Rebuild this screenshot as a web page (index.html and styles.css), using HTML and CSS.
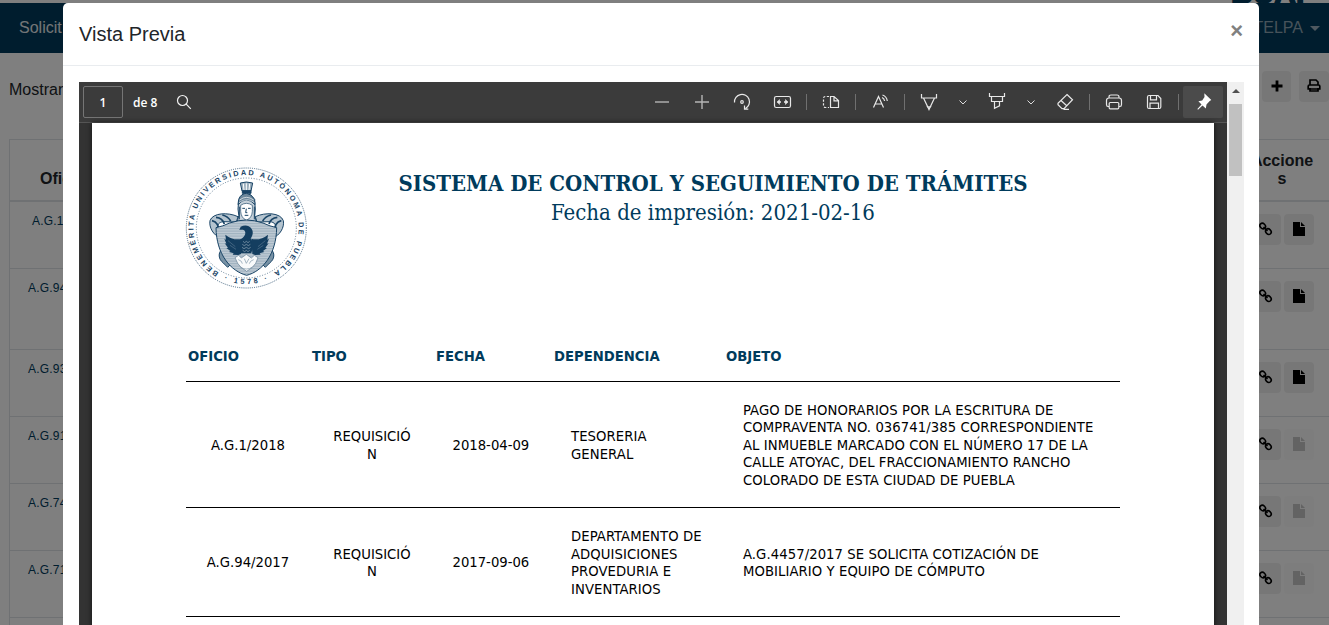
FILE: index.html
```
<!DOCTYPE html>
<html lang="es">
<head>
<meta charset="utf-8">
<title>Vista Previa</title>
<link rel="stylesheet" href="styles.css">
</head>
<body>
<svg width="0" height="0" class="defs">
  <symbol id="link" viewBox="0 0 14 14"><g fill="none" stroke="currentColor" stroke-width="1.6"><ellipse cx="3.7" cy="4" rx="3" ry="2.5" transform="rotate(45 3.7 4)"/><ellipse cx="9.4" cy="9.6" rx="3" ry="2.5" transform="rotate(45 9.4 9.6)"/><path d="M4.5 5l4 4"/></g></symbol>
  <symbol id="file" viewBox="0 0 12 14"><path fill="currentColor" d="M0 0h7v5h5v9H0zM8 0l4 4H8z"/></symbol>
  <symbol id="chev" viewBox="0 0 10 10"><path d="M1.500 3.500L5 7l3.500-3.500" fill="none" stroke="currentColor"/></symbol>
</svg>
<div class="site">
  <div class="brand"><span>BUAP</span></div>
  <nav class="navbar"><span class="nav-link">Solicit</span><span class="user">TELPA<i class="caret"></i></span></nav>
  <div class="filters"><span>Mostrar</span>
    <div class="tools">
      <span class="btn"><svg width="12" height="12" viewBox="0 0 12 12"><path d="M6 .5v11M.5 6h11" stroke="#000" stroke-width="2.800"/></svg></span>
      <span class="btn"><svg width="14" height="13" viewBox="0 0 14 13"><path d="M3 6V1h6l2 2v3M1.200 10V7.200Q1.200 6 2.400 6h9.200q1.200 0 1.200 1.200V10zM3 9v3h8V9" fill="none" stroke="#000" stroke-width="1.700"/></svg></span>
    </div>
  </div>
  <div class="grid">
    <div class="row head"><b>Oficio</b><b class="actions-title">Accione<br>s</b></div>
    <div class="row"><span class="num short">A.G.1/2018</span><span class="acts"><i class="btn"><svg><use href="#link"/></svg></i><i class="btn"><svg class="f"><use href="#file"/></svg></i></span></div>
    <div class="row tall"><span class="num">A.G.94/2017</span><span class="acts"><i class="btn"><svg><use href="#link"/></svg></i><i class="btn"><svg class="f"><use href="#file"/></svg></i></span></div>
    <div class="row"><span class="num">A.G.93/2017</span><span class="acts"><i class="btn"><svg><use href="#link"/></svg></i><i class="btn"><svg class="f"><use href="#file"/></svg></i></span></div>
    <div class="row"><span class="num">A.G.91/2017</span><span class="acts"><i class="btn"><svg><use href="#link"/></svg></i><i class="btn off"><svg class="f"><use href="#file"/></svg></i></span></div>
    <div class="row"><span class="num">A.G.74/2017</span><span class="acts"><i class="btn"><svg><use href="#link"/></svg></i><i class="btn off"><svg class="f"><use href="#file"/></svg></i></span></div>
    <div class="row"><span class="num">A.G.71/2017</span><span class="acts"><i class="btn"><svg><use href="#link"/></svg></i><i class="btn off"><svg class="f"><use href="#file"/></svg></i></span></div>
    <div class="row"></div>
  </div>
</div>
<div class="backdrop"></div>
<section class="modal">
  <header class="modal-head"><h5>Vista Previa</h5><span class="close">×</span></header>
  <div class="frame">
    <div class="viewer">
      <div class="toolbar">
        <span class="pageno">1</span><span class="of">de 8</span>
        <svg class="search" width="16" height="16" viewBox="0 0 16 16" fill="none" stroke="#f2f2f2" stroke-width="1.200"><circle cx="6.500" cy="6.500" r="5"/><path d="M10.200 10.200l4.600 4.600"/></svg>
        <div class="icons">
          <span class="ic"><svg viewBox="0 0 20 20"><path d="M3 10h14" stroke="#b5b5b5" stroke-width="1.400"/></svg></span>
          <span class="ic"><svg viewBox="0 0 20 20"><path d="M3 10h14M10 3v14" stroke="#b5b5b5" stroke-width="1.400"/></svg></span>
          <span class="ic"><svg viewBox="0 0 20 20"><path d="M2.500 10.500A7.500 7.500 0 1 1 13.500 16.500M12.500 13.500v3.600h3.800"/><circle cx="10" cy="10" r="1.300"/></svg></span>
          <span class="ic"><svg viewBox="0 0 20 20"><rect x="2.500" y="4.500" width="16" height="11" rx="1.800"/><path d="M5.500 10h3.500M12 10h3.500" stroke-width="1.500"/><path d="M4.800 10l3-2.900v5.800zM16.200 10l-3-2.900v5.800z" fill="#e8e8e8" stroke="none"/></svg></span>
          <i class="sep"></i>
          <span class="ic"><svg viewBox="0 0 20 20"><path d="M9.500 4.500H13l4.500 4v7h-8zM13 4.500v4.300h4.500"/><path d="M8 4.500H4.500Q2.500 4.500 2.500 6.500v7q0 2 2 2H8" stroke-dasharray="2.200 1.500"/></svg></span>
          <i class="sep"></i>
          <span class="ic"><svg viewBox="0 0 20 20"><path d="M3.500 15.500L8.500 4.500 13.500 15.500M5.200 12h6.600M12 5.500q2.300 1 2.600 3.500M12.500 3q4.200 1.500 4.800 6"/></svg></span>
          <i class="sep"></i>
          <span class="ic"><svg viewBox="0 0 20 20"><path d="M2.500 2v4h15V2M4.500 6L10 17.500 15.500 6M8.500 14.800h3L10 17.200z"/></svg></span>
          <span class="ic dd"><svg><use href="#chev"/></svg></span>
          <span class="ic up"><svg viewBox="0 0 20 20"><path d="M2.500 2v3.500h15V2M4.500 5.500v5h11v-5M7.500 10.500v6.800l5-2.500v-4.300"/></svg></span>
          <span class="ic dd"><svg><use href="#chev"/></svg></span>
          <span class="ic"><svg viewBox="0 0 20 20"><path d="M12 2.500l5.500 5.200-8.500 9H7l-4-4v-1.500zM6 8.500l6 5.500M8.500 17.300h5.500"/></svg></span>
          <i class="sep"></i>
          <span class="ic"><svg viewBox="0 0 20 20"><path d="M5 6V5q0-2 2-2h6q2 0 2 2v1M5 14.500H4q-1.500 0-1.500-2V8.500q0-2.500 2.500-2.500h10q2.500 0 2.500 2.500v4q0 2-1.500 2h-1"/><rect x="5.200" y="10.500" width="9.600" height="6.300" rx="1"/></svg></span>
          <span class="ic"><svg viewBox="0 0 20 20"><path d="M3.500 5q0-1.500 1.500-1.500h9l2.800 3v8.500q0 1.500-1.500 1.500H5q-1.500 0-1.500-1.500zM6.500 3.500v4.300h6V3.500M6 16.500v-5.300h8.500v5.300"/></svg></span>
          <i class="sep"></i>
          <span class="ic pin"><svg viewBox="0 0 20 20"><path d="M11.300 1.200l7 6.800-1.600.9-3.200 3.700-.7 3.800-3.300-3-4.500 4.300-.6-.6 4.100-4.600-3.100-3.300 3.800-.8 2.300-3.300z" fill="#fff" stroke="none"/></svg></span>
        </div>
      </div>
      <div class="canvas"><div class="page">
        <div class="doc-head">
          <svg class="seal" viewBox="0 0 426 426" width="142" height="142">
            <defs><path id="arc" d="M128 344A158 158 0 1 1 296 342"/><path id="arc2" d="M126 356A174 174 0 0 0 296 356"/>
            <pattern id="lines" width="5" height="5" patternUnits="userSpaceOnUse"><rect width="5" height="5" fill="#dbe2e8"/><path d="M0 2h5" stroke="#55758c" stroke-width="1.600"/></pattern></defs>
            <g fill="none" stroke="#44657f" stroke-width="3" stroke-dasharray="3 3.400"><circle cx="211" cy="210" r="180"/><circle cx="211" cy="210" r="150" stroke-width="2.500" stroke-dasharray="3 5"/></g>
            <g class="seal-text"><text textLength="818"><textPath href="#arc">BENEMÉRITA UNIVERSIDAD AUTÓNOMA DE PUEBLA</textPath></text><text textLength="134"><textPath href="#arc2" startOffset="20">· 1578 ·</textPath></text></g>
            <g stroke="#194466" stroke-width="3" fill="#fff">
              <path d="M193 75q18-6 37 0l-5 24h-27z" fill="#9db0be"/><path d="M202 77l2 20M211 76v21M221 77l-2 20" stroke="#fff"/>
              <path d="M199 98h26v8h-26z" fill="#194466"/>
              <path d="M184 190q8-16 2-37 0-44 25-47 27 3 27 47-5 21 3 37z" fill="#c5d0d9"/>
              <path d="M194 142q17-12 35 0v18q-1 20-18 27-16-8-17-27z" fill="#fff" stroke-width="2"/>
              <path d="M186 140q25-29 51 0l-1-16q-11-17-24-18-17 0-24 18z" fill="#6c879b"/><path d="M191 126q20-16 42 0M189 134q23-18 46 0" fill="none" stroke="#fff" stroke-width="2"/>
              <path d="M199 151h8M216 151h8M211 152l-2 12h5M206 172h11M190 146v38M235 146v38" fill="none" stroke-width="3"/>
              <path d="M186 176c-30-14-76-12-84 12-4 20 11 45 31 51l-6-24c-7-15 3-22 14-24l40 1z" fill="#b5c4cf"/>
              <path d="M238 176c30-14 76-12 84 12 4 20-11 45-31 51l6-24c7-15-3-22-14-24l-40 1z" fill="#b5c4cf"/>
              <path d="M108 188q22 4 22 40M120 178q20 2 25 20M139 171q17 4 25 18M316 188q-22 4-22 40M304 178q-20 2-25 20M285 171q-17 4-25 18" fill="none" stroke-width="5"/>
              <path d="M139 273c-14 11-12 31 3 42l13 13 12-12q-21-9-18-27zM284 273c14 11 12 31-3 42l-13 13-12-12q21-9 18-27z" fill="#7892a5"/>
              <path d="M120 209q20-4 41-14 26-9 50-9 24 0 50 9 21 10 41 14c-1 81-43 131-90 143-47-12-91-62-92-143z" fill="url(#lines)"/>
            </g>
            <g fill="#143e60">
              <path d="M190 216l4-10q14-6 24-1c18 10 13 28 6 37l10 14-8 30h-31l-7-30c6-17 20-18 20-32 0-9-10-9-18-8z"/>
              <path d="M198 242c-14 5-36 1-50-12l2 15-5-3 6 15-5-1 10 13-5 1 12 9-4 3 14 4-3 4 17 1 8-3zM226 242c14 5 36 1 50-12l-2 15 5-3-6 15 5-1-10 13 5 1-12 9 4 3-14 4 3 4-17 1-8-3z"/>
            </g>
            <path d="M201 250l5 4 5-4 5 4 5-4M199 259l6 4 6-4 6 4 6-4M198 268l6 4 7-4 7 4 6-4M200 277l6 4 5-4 5 4 5-4" fill="none" stroke="#b4c3ce" stroke-width="1.600"/>
            <path d="M156 248l22 18M162 262l18 12M268 248l-22 18M262 262l-18 12" stroke="#6e899e" stroke-width="1.500"/>
            <path d="M177 299l11-7 8 8 15-11 15 11 9-8 11 7-7 17-10 12-17 12-17-12-10-12z" fill="#f8fafb" stroke="#647f94" stroke-width="2"/><path d="M187 305q11 3 12 12M233 305q-11 3-13 12M205 302l6 14 8-14M192 327q19 12 38 0" fill="none" stroke="#7d96a8" stroke-width="2"/>
          </svg>
          <div class="doc-title"><h1>SISTEMA DE CONTROL Y SEGUIMIENTO DE TRÁMITES</h1><p>Fecha de impresión: 2021-02-16</p></div>
        </div>
        <table>
          <colgroup><col class="c1"><col class="c1"><col class="c3"><col class="c4"><col></colgroup>
          <tr><th>OFICIO</th><th>TIPO</th><th>FECHA</th><th>DEPENDENCIA</th><th>OBJETO</th></tr>
          <tr><td class="mid">A.G.1/2018</td><td class="mid">REQUISICIÓ<br>N</td><td>2018-04-09</td><td class="wide">TESORERIA<br>GENERAL</td><td class="wide">PAGO DE HONORARIOS POR LA ESCRITURA DE<br>COMPRAVENTA NO. 036741/385 CORRESPONDIENTE<br>AL INMUEBLE MARCADO CON EL NÚMERO 17 DE LA<br>CALLE ATOYAC, DEL FRACCIONAMIENTO RANCHO<br>COLORADO DE ESTA CIUDAD DE PUEBLA</td></tr>
          <tr><td class="mid">A.G.94/2017</td><td class="mid">REQUISICIÓ<br>N</td><td>2017-09-06</td><td class="wide">DEPARTAMENTO DE<br>ADQUISICIONES<br>PROVEDURIA E<br>INVENTARIOS</td><td class="wide">A.G.4457/2017 SE SOLICITA COTIZACIÓN DE<br>MOBILIARIO Y EQUIPO DE CÓMPUTO</td></tr>
        </table>
      </div></div>
    </div>
    <div class="scrollbar"><i class="arrow"></i><i class="thumb"></i></div>
  </div>
</section>
</body>
</html>
```
FILE: styles.css
```
* { box-sizing: border-box; }
body { margin: 0; height: 625px; overflow: hidden; position: relative; font: 16px/1.5 "Liberation Sans", Arial, sans-serif; color: #212529; background: #fff; }
.defs { position: absolute; }
.site { height: 625px; overflow: hidden; }
.brand { height: 3px; overflow: hidden; display: flex; justify-content: flex-end; align-items: flex-end; padding-right: 13px; font-weight: bold; font-size: 30px; line-height: 22px; color: #003b5c; -webkit-text-stroke: 1.500px #003b5c; }
.brand span { margin-bottom: -1px; }
.navbar { height: 50px; background: #003b5c; color: #fff; display: flex; align-items: center; justify-content: space-between; padding: 0 9px 0 19px; }
.nav-link { opacity: .9; }
.user { display: flex; align-items: center; gap: 7px; color: #8fa6b5; }
.caret { border: 5px solid transparent; border-top-color: #9fb3c0; border-bottom: 0; }
.filters { height: 86px; display: flex; justify-content: space-between; align-items: flex-start; padding-left: 9px; }
.filters > span { padding-top: 25px; }
.tools { display: flex; gap: 8px; padding-top: 18px; }
.btn { width: 30px; height: 31px; border-radius: 4px; background: #efefef; color: #000; display: flex; align-items: center; justify-content: center; flex: none; padding-bottom: 2px; }
.tools .btn { width: 29px; }
.tools .btn:last-child { width: 30px; }
.grid { margin-left: 9px; border-left: 1px solid #dee2e6; border-top: 1px solid #dee2e6; }
.row { height: 67px; border-bottom: 1px solid #dee2e6; display: flex; justify-content: space-between; align-items: flex-start; padding: 12px 15px 0 18px; }
.row.tall { height: 81px; }
.row.head { height: 62px; border-bottom-width: 2px; padding: 12px 14px 0 30px; line-height: 18px; }
.head b:first-child { padding-top: 18px; }
.actions-title { text-align: center; width: 66px; }
.num { font-size: 12px; color: #003b5c; line-height: 14px; letter-spacing: .2px; }
.num.short { padding-left: 4px; }
.acts { display: flex; gap: 3px; }
.acts svg { width: 14px; height: 14px; }
.acts .f { width: 12px; }
.off { opacity: .22; }
.backdrop { position: absolute; inset: 0; background: rgba(0,0,0,.5); }
.modal { position: absolute; left: 63px; top: 3px; width: 1196px; height: 640px; background: #fff; border-radius: 5px; }
.modal-head { height: 63px; border-bottom: 1px solid #e9ecef; display: flex; justify-content: space-between; padding: 16px; }
h5 { margin: 0; font-size: 20px; line-height: 30px; font-weight: normal; }
.close { font-weight: bold; font-size: 22px; line-height: 24px; color: #808080; }
.frame { display: flex; margin: 16px 15px 0 16px; height: 545px; }
.viewer { width: 1148px; display: flex; flex-direction: column; }
.toolbar { height: 41px; background: #3b3b3b; border-bottom: 1px solid #555; display: flex; align-items: center; padding: 0 4px; color: #fff; font: 600 12px "Open Sans", sans-serif; flex: none; }
.pageno { width: 40px; height: 32px; border: 1px solid #757575; border-radius: 2px; display: flex; align-items: center; justify-content: center; }
.of { margin-left: 10px; width: 43px; }
.icons { margin-left: auto; display: flex; align-items: center; }
.ic { width: 40px; height: 32px; display: flex; align-items: center; justify-content: center; color: #ddd; }
.ic svg { width: 20px; height: 20px; fill: none; stroke: #e8e8e8; stroke-width: 1.200; }
.up svg { margin-bottom: 3px; }
.dd { width: 28px; }
.ic.dd svg { width: 10px; height: 10px; stroke-width: 1; }
.sep { width: 1px; height: 16px; margin: 0 4px; background: #707070; }
.pin { background: #4b4b4b; border-radius: 2px; }
.canvas { background: #333; flex: 1; padding: 0 13px; }
.page { height: 100%; background: #fff; padding: 35px 94px 0 94px; overflow: hidden; box-shadow: 0 0 5px #111; }
.doc-head { display: flex; height: 177px; margin-left: -10px; }
.seal { flex: none; }
.seal-text { font: bold 22px "Liberation Sans", sans-serif; fill: #194466; }
.doc-title { width: 790px; color: #003b5c; text-align: center; font-family: "DejaVu Serif Condensed", "DejaVu Serif", serif; font-stretch: condensed; padding-top: 11px; }
h1, .doc-title p { margin: 0; font-size: 22px; line-height: 29px; white-space: nowrap; }
table { width: 933.500px; table-layout: fixed; border-collapse: collapse; font: 14.700px/17.600px "DejaVu Sans Condensed", "DejaVu Sans", sans-serif; font-stretch: condensed; color: #000; }
.c1 { width: 124px; }
.c3 { width: 118px; }
.c4 { width: 172px; }
th { text-align: left; color: #003b5c; height: 46px; padding: 0 2px 4px; vertical-align: middle; border-bottom: 1px solid #000; }
td { padding: 19.200px 0 18.200px 18.500px; border-bottom: 1px solid #000; white-space: nowrap; }
.wide { letter-spacing: .075px; padding-left: 19px; }
.mid { padding-left: 0; text-align: center; }
.scrollbar { width: 17px; background: #f0f0f0; display: flex; flex-direction: column; align-items: center; }
.arrow { border: 4px solid transparent; border-top: 0; border-bottom: 4px solid #505050; margin-top: 7px; }
.thumb { width: 13px; height: 72px; background: #c1c1c1; margin-top: 11px; }
```
